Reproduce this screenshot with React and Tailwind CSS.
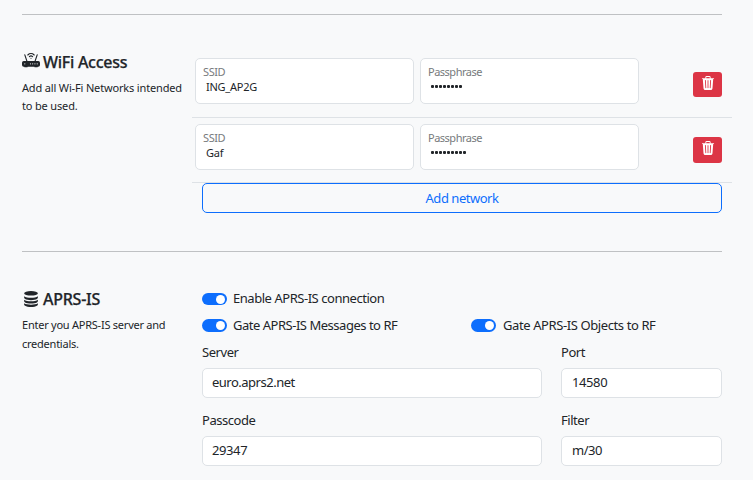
import { BsRouterFill, BsTrash3Fill } from "react-icons/bs";

function DatabaseIcon() {
  const band =
    "M768 768q237 0 443-43t325-127v170q0 69-103 128t-280 93.5-385 34.5-385-34.5-280-93.5-103-128v-170q119 84 325 127t443 43z";
  return (
    <svg viewBox="0 0 1536 1792" className="mr-[2px] ml-[2px] h-[16px] w-[14px]" fill="currentColor">
      <ellipse cx="768" cy="256" rx="768" ry="256" />
      <path d={band} />
      <path d={band} transform="translate(0 384)" />
      <path d={band} transform="translate(0 768)" />
    </svg>
  );
}

function SectionHeader({ icon, title, children, titleClass, textClass }) {
  return (
    <div className="w-[180px] shrink-0">
      <h5 className={`flex h-6 items-center gap-[3px] text-[16px] font-medium whitespace-nowrap ${titleClass}`}>
        {icon}
        <span className="[-webkit-text-stroke:0.25px_#212529]">{title}</span>
      </h5>
      <p className={`whitespace-nowrap text-[11px] ${textClass}`}>{children}</p>
    </div>
  );
}

function FloatingField({ label, value, secret }) {
  return (
    <div className="h-[46px] w-[219px] rounded-[5px] border border-[#dee2e6] bg-white pt-[5px] pl-[7px]">
      <div className={`h-[15px] text-[11px] leading-[15px] text-[#777a7d] ${secret ? "tracking-[-0.5px]" : "tracking-[-0.4px]"}`}>
        {label}
      </div>
      {secret ? (
        <div className="flex h-[15px] items-center gap-px pl-[3px]">
          {Array.from({ length: value }, (_, i) => (
            <span key={i} className="size-[3px] rounded-[1px] bg-[#212529]" />
          ))}
        </div>
      ) : (
        <div className="pl-[3px] text-[11px] leading-[15px] tracking-[-0.25px]">{value}</div>
      )}
    </div>
  );
}

function NetworkRow({ ssid, length, rowClass, buttonClass }) {
  return (
    <div className={`flex border-b border-[#dee2e6] pl-[3px] ${rowClass}`}>
      <FloatingField label="SSID" value={ssid} />
      <div className="w-[6px]" />
      <FloatingField label="Passphrase" value={length} secret />
      <button className={`ml-[54px] flex w-[29px] justify-center rounded-[3px] bg-[#dc3545] pt-[4px] text-white ${buttonClass}`}>
        <BsTrash3Fill size={14} />
      </button>
    </div>
  );
}

function Toggle({ label, textClass, switchClass = "mt-px h-[13px]" }) {
  return (
    <label className="flex h-[18px] items-center whitespace-nowrap">
      <span className={`flex w-[25px] items-center justify-end rounded-full bg-[#0d6efd] pr-[2px] ${switchClass}`}>
        <span className="size-[9px] rounded-full bg-white" />
      </span>
      <span className={`ml-[6px] text-[13px] leading-[18px] ${textClass}`}>{label}</span>
    </label>
  );
}

function Field({ label, value, widthClass, valueClass = "pl-[9px] tracking-[-0.5px]" }) {
  return (
    <div className={widthClass}>
      <div className="h-[25px] text-[13px] leading-[18px] tracking-[-0.45px]">{label}</div>
      <div className={`h-[30px] rounded-[5px] border border-[#dee2e6] bg-white text-[13px] leading-[27px] ${valueClass}`}>
        {value}
      </div>
    </div>
  );
}

export default function App() {
  return (
    <div className="h-[480px] w-[753px] overflow-hidden bg-[#f8f9fa] pt-[14px] pl-[22px] font-['Noto_Sans','Open_Sans',sans-serif] text-[#212529]">
      <section className="h-[237px] w-[700px] border-t border-[#bfc1c3]">
        <div className="flex pt-[35px]">
          <SectionHeader
            icon={<BsRouterFill size={18} className="-mt-[3px]" />}
            title="WiFi Access"
            titleClass="tracking-[-0.28px]"
            textClass="pt-[5px] leading-[18px] tracking-[-0.16px]"
          >
            Add all Wi-Fi Networks intended
            <br />
            to be used.
          </SectionHeader>
          <div className="-ml-[10px] w-[540px] shrink-0 pt-[8px]">
            <NetworkRow ssid="ING_AP2G" length={8} rowClass="h-[60px]" buttonClass="mt-[14px] h-[25px]" />
            <NetworkRow ssid="Gaf" length={9} rowClass="h-[65px] pt-[6px]" buttonClass="mt-[13px] h-[26px]" />
            <button className="ml-[10px] block h-[30px] w-[520px] rounded-[5px] border border-[#0d6efd] text-center text-[13px] leading-[28px] tracking-[-0.47px] text-[#0d6efd]">
              Add network
            </button>
          </div>
        </div>
      </section>
      <section className="w-[700px] border-t border-[#bfc1c3]">
        <div className="flex pt-[35px]">
          <SectionHeader
            icon={<DatabaseIcon />}
            title="APRS-IS"
            titleClass="tracking-[-0.25px]"
            textClass="pt-[4px] leading-[19px] tracking-[-0.24px]"
          >
            Enter you APRS-IS server and
            <br />
            credentials.
          </SectionHeader>
          <div className="w-[520px] shrink-0 pt-[2px]">
            <Toggle label="Enable APRS-IS connection" textClass="tracking-[-0.46px]" switchClass="mt-[2px] h-[12px]" />
            <div className="mt-[9px] flex">
              <div className="w-[269px]">
                <Toggle label="Gate APRS-IS Messages to RF" textClass="tracking-[-0.48px]" />
              </div>
              <Toggle label="Gate APRS-IS Objects to RF" textClass="pl-px tracking-[-0.4px]" />
            </div>
            <div className="mt-[9px] flex gap-[19px]">
              <Field label="Server" value="euro.aprs2.net" widthClass="w-[340px]" />
              <Field label="Port" value="14580" widthClass="w-[161px]" valueClass="pl-[10px] tracking-[-0.4px]" />
            </div>
            <div className="mt-[13px] flex gap-[19px]">
              <Field label="Passcode" value="29347" widthClass="w-[340px]" valueClass="pl-[9px] tracking-[-0.4px]" />
              <Field label="Filter" value="m/30" widthClass="w-[161px]" valueClass="pl-[10px] tracking-[-0.5px]" />
            </div>
          </div>
        </div>
      </section>
    </div>
  );
}
